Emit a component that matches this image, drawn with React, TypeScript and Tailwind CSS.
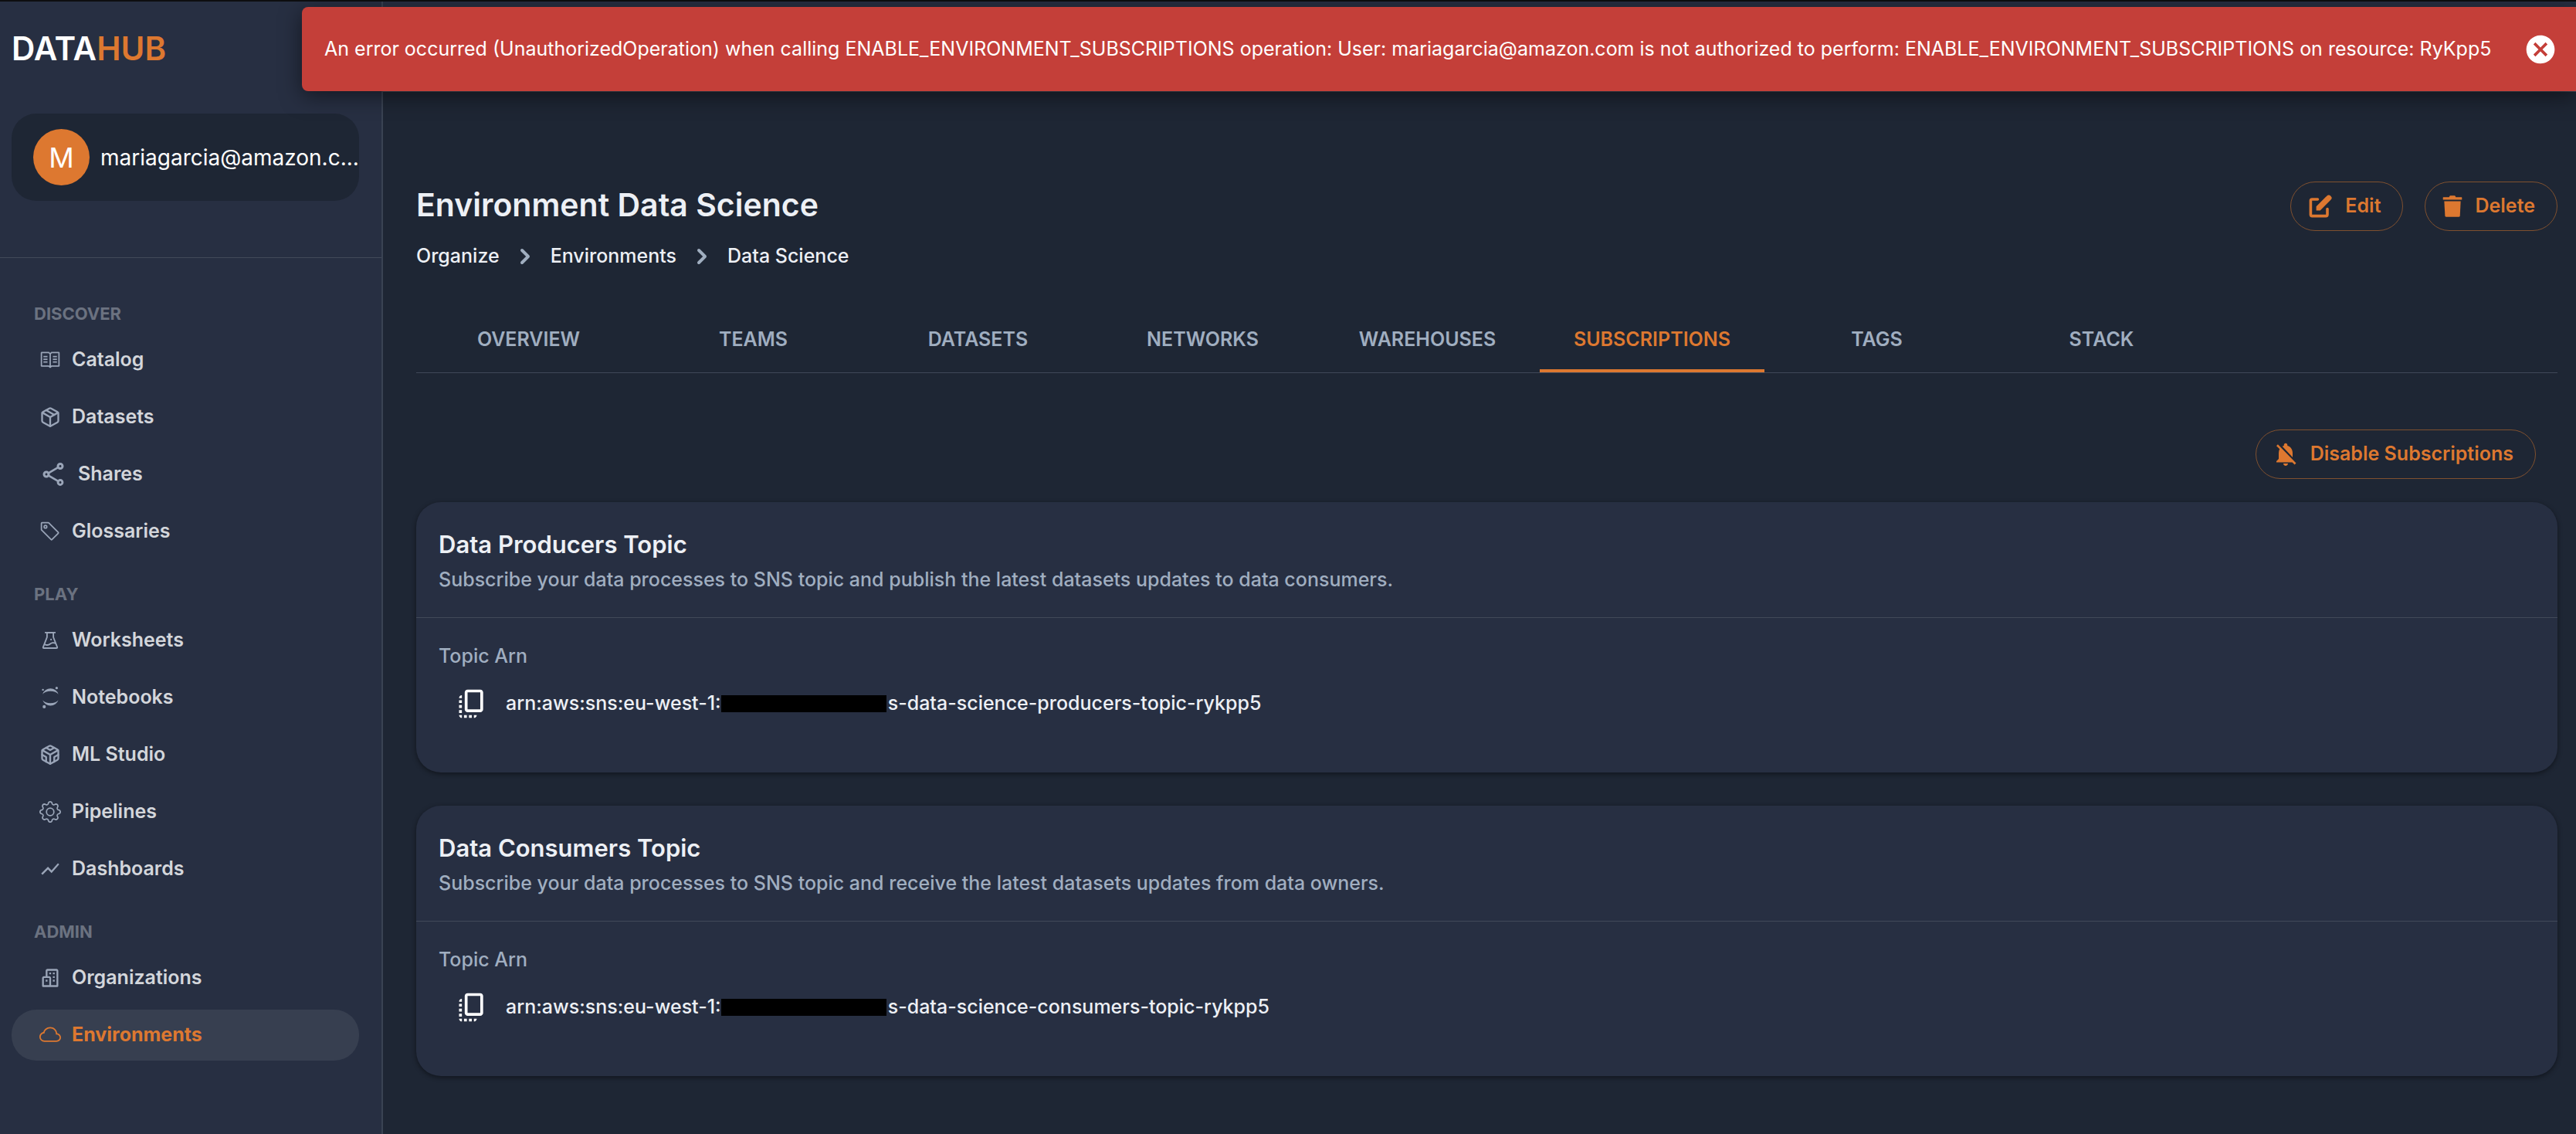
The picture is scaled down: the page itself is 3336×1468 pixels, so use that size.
import React from "react";
import { BsCloud, BsGear, BsTag } from "react-icons/bs";
import { BiBuildings } from "react-icons/bi";
import { VscBook } from "react-icons/vsc";
import { FiCodesandbox, FiPackage } from "react-icons/fi";
import { AiOutlineExperiment } from "react-icons/ai";
import { SiJupyter } from "react-icons/si";
import { MdCancel, MdCopyAll, MdNotificationsOff, MdShowChart } from "react-icons/md";

type IconType = React.ComponentType<{ className?: string }>;

function ShareIcon({ className }: { className?: string }) {
  return (
    <svg viewBox="0 0 24 24" fill="currentColor" className={className} aria-hidden="true">
      <path d="M18 16.08c-.76 0-1.44.3-1.96.77L8.91 12.7c.05-.23.09-.46.09-.7s-.04-.47-.09-.7l7.05-4.11c.54.5 1.25.81 2.04.81 1.66 0 3-1.34 3-3s-1.34-3-3-3-3 1.34-3 3c0 .24.04.47.09.7L8.04 9.81C7.5 9.31 6.79 9 6 9c-1.66 0-3 1.34-3 3s1.34 3 3 3c.79 0 1.5-.31 2.04-.81l7.12 4.16c-.05.21-.08.43-.08.65 0 1.61 1.31 2.92 2.92 2.92s2.92-1.31 2.92-2.92c0-1.61-1.31-2.92-2.92-2.92zM18 4c.55 0 1 .45 1 1s-.45 1-1 1-1-.45-1-1 .45-1 1-1zM6 13c-.55 0-1-.45-1-1s.45-1 1-1 1 .45 1 1-.45 1-1 1zm12 7.02c-.55 0-1-.45-1-1s.45-1 1-1 1 .45 1 1-.45 1-1 1z" />
    </svg>
  );
}

function PencilIcon({ className }: { className?: string }) {
  return (
    <svg viewBox="0 0 20 20" fill="currentColor" className={className} aria-hidden="true">
      <path d="M17.414 2.586a2 2 0 00-2.828 0L7 10.172V13h2.828l7.586-7.586a2 2 0 000-2.828z" />
      <path fillRule="evenodd" clipRule="evenodd" d="M2 6a2 2 0 012-2h4a1 1 0 010 2H4v10h10v-4a1 1 0 112 0v4a2 2 0 01-2 2H4a2 2 0 01-2-2V6z" />
    </svg>
  );
}

function TrashIcon({ className }: { className?: string }) {
  return (
    <svg viewBox="2 2 20 20" fill="currentColor" className={className} aria-hidden="true">
      <path d="M4.2 4.2h4.9l.5-1.1q.1-.2.4-.2h4q.3 0 .4.2l.5 1.1h4.9q.4 0 .4.4v1.4q0 .4-.4.4H4.2q-.4 0-.4-.4V4.6q0-.4.4-.4z" />
      <path d="M4.9 7.6h14.2l-.6 12.5q-.1 1-1.1 1H6.700q-1 0-1.1-1z" />
    </svg>
  );
}

function ChevronIcon({ className }: { className?: string }) {
  return (
    <svg viewBox="0 0 20 20" fill="currentColor" className={className} aria-hidden="true">
      <path fillRule="evenodd" clipRule="evenodd" d="M7.293 14.707a1 1 0 010-1.414L10.586 10 7.293 6.707a1 1 0 011.414-1.414l4 4a1 1 0 010 1.414l-4 4a1 1 0 01-1.414 0z" />
    </svg>
  );
}

type NavItem = { label: string; icon: IconType; active?: boolean; large?: boolean };

const sections: { title: string; items: NavItem[] }[] = [
  {
    title: "Discover",
    items: [
      { label: "Catalog", icon: VscBook },
      { label: "Datasets", icon: FiPackage },
      { label: "Shares", icon: ShareIcon, large: true },
      { label: "Glossaries", icon: BsTag },
    ],
  },
  {
    title: "Play",
    items: [
      { label: "Worksheets", icon: AiOutlineExperiment },
      { label: "Notebooks", icon: SiJupyter },
      { label: "ML Studio", icon: FiCodesandbox },
      { label: "Pipelines", icon: BsGear },
      { label: "Dashboards", icon: MdShowChart },
    ],
  },
  {
    title: "Admin",
    items: [
      { label: "Organizations", icon: BiBuildings },
      { label: "Environments", icon: BsCloud, active: true },
    ],
  },
];

const tabs = ["Overview", "Teams", "Datasets", "Networks", "Warehouses", "Subscriptions", "Tags", "Stack"];

function NavLink({ item }: { item: NavItem }) {
  const Icon = item.icon;
  return (
    <li>
      <a
        href="#"
        aria-current={item.active ? "page" : undefined}
        className={
          item.active
            ? "flex h-[66px] items-center gap-[14px] rounded-[32px] bg-[#373f50] pl-9 text-[25px] font-bold text-[#dd7830]"
            : "flex h-[66px] items-center gap-[14px] rounded-[32px] pl-9 text-[25px] font-semibold text-[#d3d6db]"
        }
      >
        <Icon className={item.active ? "size-7" : item.large ? "size-9 text-[#9aa5b8]" : "size-7 text-[#9aa5b8]"} />
        {item.label}
      </a>
    </li>
  );
}

function Sidebar() {
  return (
    <aside className="flex w-[496px] shrink-0 flex-col border-r-2 border-[#3a4353] bg-[#272f42]">
      <a href="#" className="flex h-[120px] items-center pl-[15px] text-[42px] font-semibold text-white">
        DATA<span className="text-[#dd7830]">HUB</span>
      </a>
      <div className="border-b border-[#414959] pt-[25px] pr-[29px] pb-[73px] pl-[15px]">
        <a href="#" className="flex h-[113px] items-center gap-[14px] rounded-[32px] bg-[#1e2634] pl-7 text-white">
          <span className="flex size-[73px] shrink-0 items-center justify-center rounded-full bg-[#dd7830] text-[36px]">M</span>
          <span className="text-[28px] whitespace-nowrap">mariagarcia@amazon.c...</span>
        </a>
      </div>
      <nav className="flex flex-col gap-7 pt-[52px] pr-[29px] pl-[15px]">
        {sections.map((section) => (
          <section key={section.title}>
            <h2 className="mb-[7px] pl-[29px] text-[22px] leading-10 font-bold text-[#6b7280] uppercase">{section.title}</h2>
            <ul className="flex flex-col gap-2">
              {section.items.map((item) => (
                <NavLink key={item.label} item={item} />
              ))}
            </ul>
          </section>
        ))}
      </nav>
    </aside>
  );
}

function OutlineButton({ icon, children }: { icon: React.ReactNode; children: React.ReactNode }) {
  return (
    <button className="flex h-16 items-center gap-[14px] rounded-full border border-[#7f502f] pr-7 pl-5 text-[25px] font-semibold text-[#dd7830]">
      {icon}
      {children}
    </button>
  );
}

function TopicCard({ title, description, suffix }: { title: string; description: string; suffix: string }) {
  return (
    <section className="rounded-[32px] bg-[#272f42] shadow-[0_2px_6px_rgba(0,0,0,0.45)]">
      <header className="border-b border-[#414959] px-[29px] pt-[30px] pb-[29px]">
        <h2 className="text-[31px] leading-[50px] font-semibold text-[#edf0f5]">{title}</h2>
        <p className="text-[25px] leading-10 font-medium text-[#a0aec0]">{description}</p>
      </header>
      <div className="px-[29px] pt-[29px] pb-[47px]">
        <h3 className="text-[25px] leading-10 font-medium text-[#a0aec0]">Topic Arn</h3>
        <div className="flex h-[84px] items-center gap-[22px] pl-[21px] text-[25px] font-medium text-[#edf0f5]">
          <button aria-label="Copy topic arn" className="text-white">
            <MdCopyAll className="size-11" />
          </button>
          <p className="flex items-center">
            arn:aws:sns:eu-west-1:
            <span className="mr-[2px] h-[22px] w-[214px] bg-black" />
            {suffix}
          </p>
        </div>
      </div>
    </section>
  );
}

export default function App() {
  return (
    <div className="flex min-h-screen flex-col border-t-2 border-[#0d0e10] bg-[#1e2634] font-['Inter',sans-serif] text-[#edf0f5]">
      <div role="alert" className="absolute top-[9px] right-0 left-[391px] flex h-[109px] items-center justify-between rounded-l-lg bg-[#c43f39] pr-6 pl-[29px] text-white shadow-[0_6px_28px_rgba(0,0,0,0.5)]">
        <p className="text-[25px] whitespace-nowrap">
          An error occurred (UnauthorizedOperation) when calling ENABLE_ENVIRONMENT_SUBSCRIPTIONS operation: User: mariagarcia@amazon.com is not authorized to perform: ENABLE_ENVIRONMENT_SUBSCRIPTIONS on resource: RyKpp5
        </p>
        <button aria-label="Dismiss">
          <MdCancel className="size-11" />
        </button>
      </div>
      <div className="flex flex-1">
        <Sidebar />
        <div className="flex min-w-0 flex-1 flex-col">
          <header className="h-[117px] shrink-0 border-b border-[#414959] bg-[#272f42]" />
          <main className="flex flex-col pt-[116px] pr-6 pl-[43px]">
            <div className="flex justify-between">
              <div>
                <h1 className="text-[41px] leading-[60px] font-semibold">Environment Data Science</h1>
                <nav aria-label="Breadcrumb" className="mt-[17px] flex h-10 items-center gap-[13px] text-[25px] font-medium">
                  <a href="#">Organize</a>
                  <ChevronIcon className="size-10 text-[#a0aec0]" />
                  <a href="#">Environments</a>
                  <ChevronIcon className="size-10 text-[#a0aec0]" />
                  <a href="#">Data Science</a>
                </nav>
              </div>
              <div className="flex gap-7">
                <OutlineButton icon={<PencilIcon className="size-9" />}>Edit</OutlineButton>
                <OutlineButton icon={<TrashIcon className="size-[30px]" />}>Delete</OutlineButton>
              </div>
            </div>
            <div role="tablist" className="mt-[46px] flex border-b border-[#3f4858]">
              {tabs.map((tab) => (
                <button
                  key={tab}
                  role="tab"
                  aria-selected={tab === "Subscriptions"}
                  className={
                    tab === "Subscriptions"
                      ? "h-[84px] w-[291px] border-b-4 border-[#dd7830] pt-1 text-[25px] font-semibold text-[#dd7830] uppercase"
                      : "h-[84px] w-[291px] border-b-4 border-transparent pt-1 text-[25px] font-semibold text-[#a0aec0] uppercase"
                  }
                >
                  {tab}
                </button>
              ))}
            </div>
            <div className="mt-[73px] mb-[30px] flex justify-end pr-7">
              <OutlineButton icon={<MdNotificationsOff className="size-9" />}>Disable Subscriptions</OutlineButton>
            </div>
            <div className="flex flex-col gap-[43px] pb-14">
              <TopicCard
                title="Data Producers Topic"
                description="Subscribe your data processes to SNS topic and publish the latest datasets updates to data consumers."
                suffix="s-data-science-producers-topic-rykpp5"
              />
              <TopicCard
                title="Data Consumers Topic"
                description="Subscribe your data processes to SNS topic and receive the latest datasets updates from data owners."
                suffix="s-data-science-consumers-topic-rykpp5"
              />
            </div>
          </main>
        </div>
      </div>
    </div>
  );
}
